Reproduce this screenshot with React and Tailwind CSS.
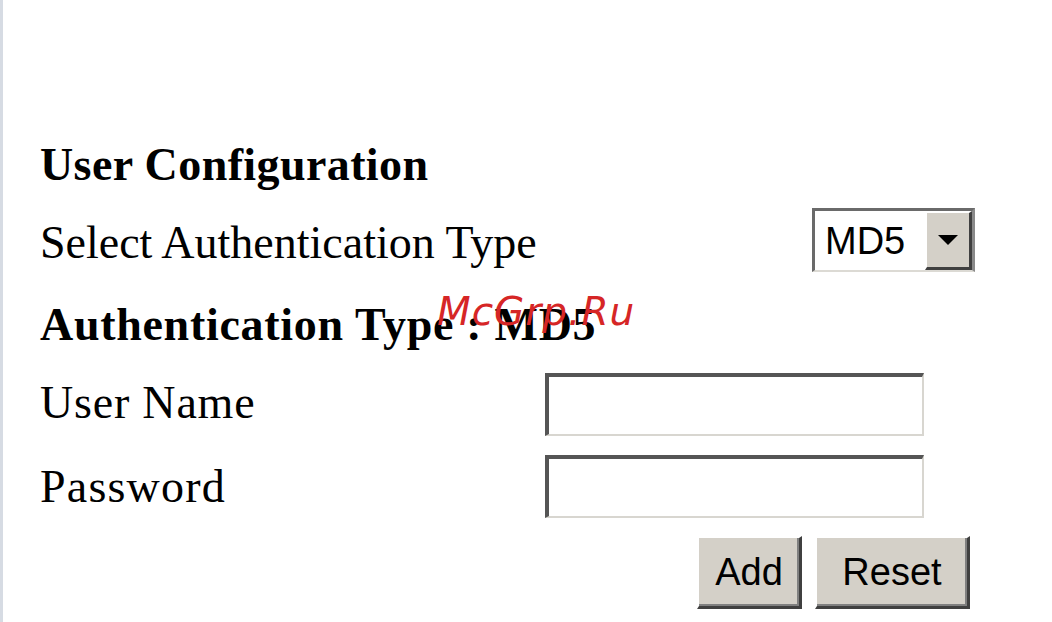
import React, { useState } from 'react';

const serif = { fontFamily: '"Liberation Serif", "Times New Roman", serif' };

function Win98Button({ children, className }) {
  return (
    <button
      type="button"
      className={`h-[73px] bg-[#d4d0c8] border-t-2 border-l-2 border-t-white border-l-white border-b-[3px] border-r-[3px] border-b-[#404040] border-r-[#404040] shadow-[inset_-2px_-2px_0_#808080] text-[38px] leading-none text-black font-['Liberation_Sans',Arial,sans-serif] ${className}`}
    >
      {children}
    </button>
  );
}

function SunkenInput({ value, onChange, type = 'text' }) {
  return (
    <input
      type={type}
      value={value}
      onChange={(e) => onChange(e.target.value)}
      className="w-[379px] h-[63px] bg-white border-t-4 border-l-4 border-t-[#555555] border-l-[#555555] border-b-2 border-r-2 border-b-[#d8d6d0] border-r-[#d8d6d0] outline-none px-2 text-[38px]"
    />
  );
}

export default function App() {
  const [user, setUser] = useState('');
  const [pass, setPass] = useState('');

  return (
    <div className="relative w-[1052px] h-[622px] bg-white border-l-[3px] border-l-[#d6dbe3] text-black overflow-hidden" style={serif}>
      <div className="pt-[142px] pl-[37px] w-[972px]">
        <h1 className="text-[46px] leading-[46px] font-bold tracking-[0.4px]">User Configuration</h1>

        <div className="mt-[20px] h-[64px] flex items-start">
          <span className="mt-[12px] text-[46px] leading-[46px]">Select Authentication Type</span>
          <div className="ml-auto w-[163px] h-[64px] flex bg-white border-t-[3px] border-l-[3px] border-t-[#6a6a6a] border-l-[#6a6a6a] border-r-[3px] border-r-[#8a8a8a] border-b-2 border-b-[#dcdad4]">
            <span className="flex-1 pl-[10px] flex items-center text-[38px] leading-none font-['Liberation_Sans',Arial,sans-serif]">MD5</span>
            <div className="w-[47px] h-full bg-[#d4d0c8] border-t-2 border-l-2 border-t-white border-l-white border-b-[3px] border-r-[3px] border-b-[#404040] border-r-[#404040] flex items-center justify-center">
              <svg width="20" height="11" viewBox="0 0 20 11">
                <polygon points="0,0 20,0 10,10" fill="#000" />
              </svg>
            </div>
          </div>
        </div>

        <h2 className="mt-[30px] text-[46px] leading-[46px] font-bold tracking-[0.7px]">Authentication Type : MD5</h2>

        <div className="mt-[25px] flex items-start">
          <span className="w-[505px] mt-[7px] text-[46px] leading-[46px] tracking-[0.8px]">User Name</span>
          <SunkenInput value={user} onChange={setUser} />
        </div>

        <div className="mt-[19px] flex items-start">
          <span className="w-[505px] mt-[9px] text-[46px] leading-[46px] tracking-[1.2px]">Password</span>
          <SunkenInput value={pass} onChange={setPass} type="password" />
        </div>

        <div className="mt-[18px] flex justify-end gap-[13px] pr-[5px]">
          <Win98Button className="w-[105px]">Add</Win98Button>
          <Win98Button className="w-[155px]">Reset</Win98Button>
        </div>
      </div>

      <div
        className="absolute left-[434px] top-[292px] text-[39px] leading-[39px] italic text-[#d62626] tracking-[1px] pointer-events-none"
        style={{ fontFamily: '"DejaVu Sans", Verdana, sans-serif' }}
      >
        McGrp.Ru
      </div>
    </div>
  );
}
